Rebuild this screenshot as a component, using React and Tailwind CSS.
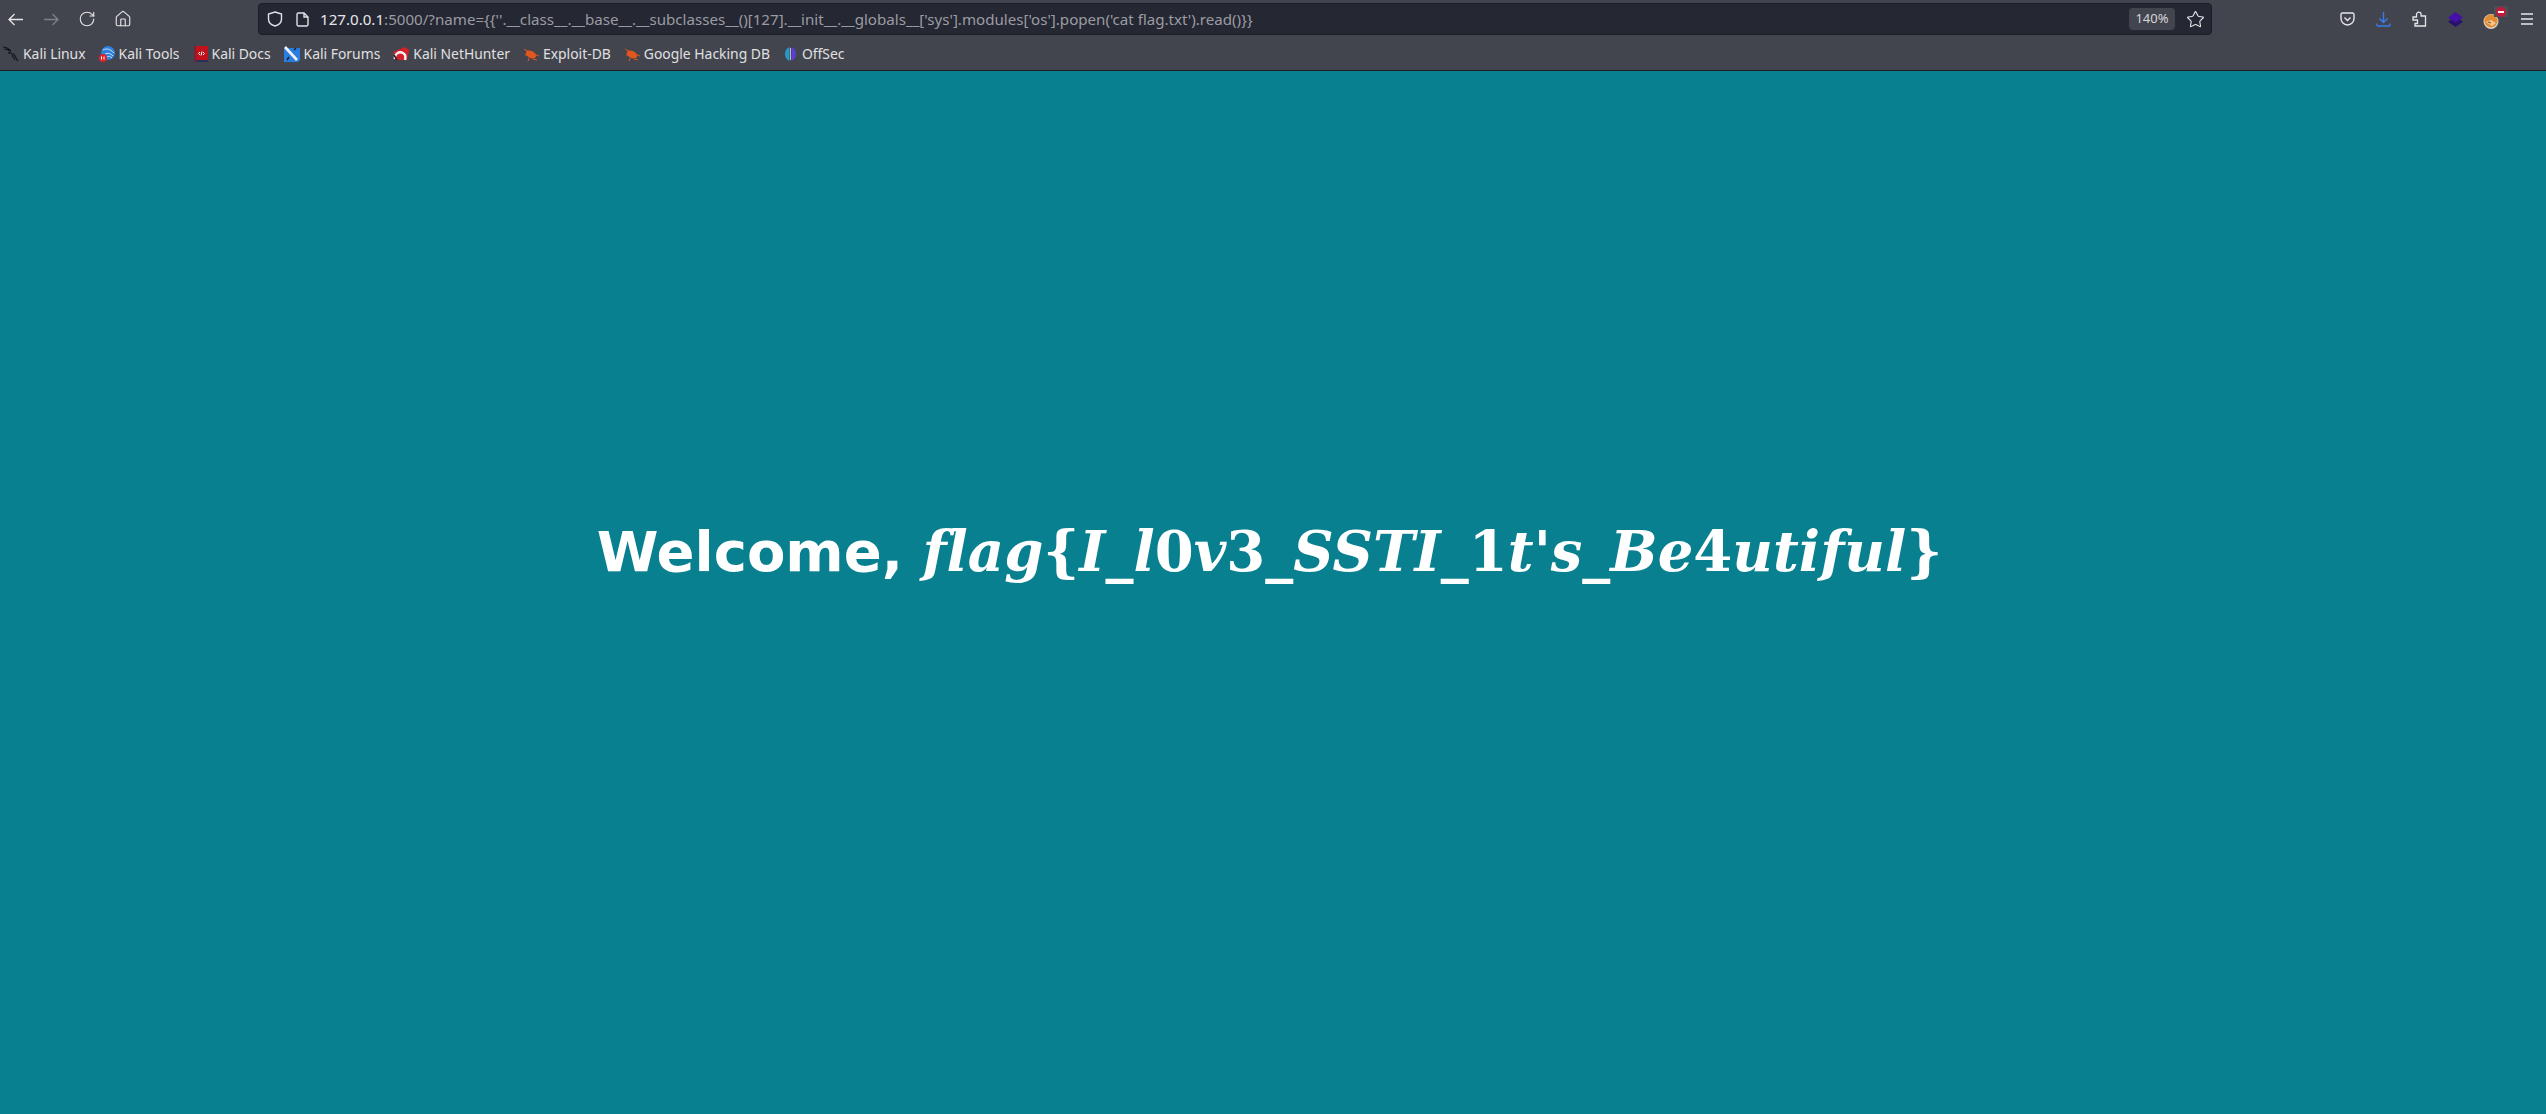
import React from 'react';
import { RotateCw, Home, Star } from 'lucide-react';

const bookmarks = [
  { label: 'Kali Linux', icon: 'kali' },
  { label: 'Kali Tools', icon: 'tools' },
  { label: 'Kali Docs', icon: 'docs' },
  { label: 'Kali Forums', icon: 'forums' },
  { label: 'Kali NetHunter', icon: 'nethunter' },
  { label: 'Exploit-DB', icon: 'bug' },
  { label: 'Google Hacking DB', icon: 'bug' },
  { label: 'OffSec', icon: 'offsec' },
];

const BookmarkIcon = ({ type }) => {
  if (type === 'kali') {
    return (
      <svg width="16" height="16" viewBox="0 0 16 16" fill="none" stroke="#15161a" strokeWidth="1.2">
        <path d="M0 1c3 0 5 1 7 3 1 1 0 3-2 3 3 0 6 1 7 3 1 1 1 3 3 5M1 3c2 0 4 0 5 2M9 9c1 2 2 3 3 5" />
      </svg>
    );
  }
  if (type === 'tools') {
    return (
      <svg width="16" height="16" viewBox="0 0 16 16">
        <circle cx="9" cy="7" r="7" fill="#2f7fdc" />
        <path d="M4 4c4-2 7-1 11 3M6 8c3-1 5-1 8 2M8 11c2-1 3-1 5 1" stroke="#cfe2f7" fill="none" />
        <circle cx="4" cy="12" r="4" fill="#d9242b" />
        <path d="M2.500 10.500v3M5 10.500v3" stroke="#fff" />
      </svg>
    );
  }
  if (type === 'docs') {
    return (
      <svg width="14" height="16" viewBox="0 0 14 16" className="ml-[1px]">
        <rect x="0" y="0" width="14" height="15" fill="#c1121c" />
        <rect x="0" y="14" width="14" height="2" fill="#26305c" />
        <rect x="0" y="0" width="2" height="16" fill="#7d2030" />
        <path d="M6 6L4.500 7.500 6 9M9 6l1.500 1.500L9 9M8 5.500L7 9.500" stroke="#fff" fill="none" />
      </svg>
    );
  }
  if (type === 'forums') {
    return (
      <svg width="16" height="16" viewBox="0 0 16 16">
        <path d="M0 2h16v12l-2 2H0z" fill="#2a7de1" />
        <path d="M1 1l12 13" stroke="#f2f2f2" strokeWidth="2.6" />
        <path d="M10 4l2-2M5 11l-2 3" stroke="#1c2230" strokeWidth="1.500" />
      </svg>
    );
  }
  if (type === 'nethunter') {
    return (
      <svg width="16" height="16" viewBox="0 0 16 16">
        <path d="M0 6l12-5 4 3-2 10H3z" fill="#d5202c" />
        <path d="M2 13c-1-5 4-8 8-6 2 1 3 3 2 7" fill="none" stroke="#f4f4f4" strokeWidth="2.4" />
        <path d="M1 9l3 5" stroke="#23242a" strokeWidth="1.500" />
      </svg>
    );
  }
  if (type === 'bug') {
    return (
      <svg width="16" height="16" viewBox="0 0 16 16" fill="#e2571e">
        <ellipse cx="8" cy="8.500" rx="5.500" ry="3.500" transform="rotate(25 8 8.500)" />
        <path d="M1 3l5 3M2 9l3 0M10 13l4 1M11 8l5 2M6 12l-1 3" stroke="#e2571e" />
      </svg>
    );
  }
  return (
    <svg width="15" height="16" viewBox="0 0 15 16">
      <path d="M6.500 1a7 7.500 0 0 0 0 14z" fill="#2a97c8" />
      <path d="M8.500 1a7 7.500 0 0 1 0 14z" fill="#5a3fd0" />
      <path d="M7.500 2v12" stroke="#d8d8e0" strokeWidth="0.8" />
    </svg>
  );
};

const ToolbarButton = ({ children, className }) => (
  <div className={`flex h-[32px] w-[36px] shrink-0 items-center justify-center ${className || ''}`}>{children}</div>
);

const BookmarkItem = ({ label, icon }) => (
  <div className="flex items-center gap-[4px]">
    <BookmarkIcon type={icon} />
    <span className="whitespace-nowrap">{label}</span>
  </div>
);

export default function App() {
  return (
    <div className="flex min-h-screen flex-col bg-[#08808f] font-['Noto_Sans',sans-serif]">
      {/* Browser chrome */}
      <div className="h-[71px] shrink-0 border-b border-[#1c1d22] bg-[#42454d]">
        <div className="flex h-[38px] items-start pt-[3px]">
          <div className="-ml-[3px] flex w-[261px] shrink-0 items-center">
            <ToolbarButton>
              <svg width="15" height="13" viewBox="0 0 15 13" fill="none" stroke="#e6e6e8" strokeWidth="1.300">
                <path d="M15 6.500H1M6.500 1L1 6.500 6.500 12" />
              </svg>
            </ToolbarButton>
            <ToolbarButton>
              <svg width="15" height="13" viewBox="0 0 15 13" fill="none" stroke="#7f8086" strokeWidth="1.300">
                <path d="M0 6.500h14M8.500 1L14 6.500 8.500 12" />
              </svg>
            </ToolbarButton>
            <ToolbarButton><RotateCw size={18} strokeWidth={1.500} className="text-[#e6e6e8]" /></ToolbarButton>
            <ToolbarButton><Home size={18} strokeWidth={1.500} className="text-[#e6e6e8]" /></ToolbarButton>
          </div>
          <div className="flex h-[32px] w-[1954px] shrink-0 items-center rounded border border-[#1c1d22] bg-[#252733] pl-[8px] pr-[6px]">
            <svg width="16" height="16" viewBox="0 0 16 16" fill="none" stroke="#e2e2e4" strokeWidth="1.400" className="shrink-0">
              <path d="M8 1l6.500 2v5c0 3.500-3 6-6.500 7-3.500-1-6.500-3.500-6.500-7V3z" />
            </svg>
            <svg width="13" height="15" viewBox="0 0 13 15" fill="none" stroke="#e2e2e4" strokeWidth="1.400" className="ml-[13px] shrink-0">
              <path d="M1 2.500A1.500 1.500 0 0 1 2.500 1H8l4 4v7.500a1.500 1.500 0 0 1-1.500 1.500h-8A1.500 1.500 0 0 1 1 12.500zM8 1v4h4" />
            </svg>
            <span className="ml-[11px] whitespace-nowrap text-[15.13px] text-[#e6e6e8]">
              127.0.0.1<span className="text-[#9b9ca2]">{":5000/?name={{''.__class__.__base__.__subclasses__()[127].__init__.__globals__['sys'].modules['os'].popen('cat flag.txt').read()}}"}</span>
            </span>
            <span className="ml-auto flex h-[22px] w-[46px] items-center justify-center rounded bg-[#42454d] text-[13px] text-[#d5d5d8]">140%</span>
            <Star size={19} strokeWidth={1.400} className="ml-[11px] shrink-0 text-[#e6e6e8]" />
          </div>
          <div className="flex flex-1 items-center justify-end pr-[1px]">
            <ToolbarButton>
              <svg width="15" height="14" viewBox="0 0 15 14" fill="none" stroke="#e6e6e8" strokeWidth="1.400">
                <path d="M1 2.500A1.500 1.500 0 0 1 2.500 1h10A1.500 1.500 0 0 1 14 2.500V6.500a6.500 6.500 0 0 1-13 0z" />
                <path d="M4.500 5.500l3 3 3-3" />
              </svg>
            </ToolbarButton>
            <ToolbarButton>
              <svg width="15" height="15" viewBox="0 0 15 15" fill="none" stroke="#3a7cf0" strokeWidth="1.400">
                <path d="M7.500 0v10M3.500 6.500l4 4 4-4M1 11.500v1.500a1 1 0 0 0 1 1h11a1 1 0 0 0 1-1v-1.500" />
              </svg>
            </ToolbarButton>
            <ToolbarButton>
              <svg width="15" height="16" viewBox="0 0 15 16" fill="none" stroke="#e6e6e8" strokeWidth="1.300">
                <path d="M1 6h3.500V3.500a2.300 2.300 0 0 1 4.600 0V5h4.400v10H3v-2.500h2.500V9H1z" />
              </svg>
            </ToolbarButton>
            <ToolbarButton>
              <svg width="17" height="17" viewBox="0 0 16 16">
                <path d="M8 5l7 5-7 5-7-5z" fill="#26126b" />
                <path d="M8 1l7 5-7 5-7-5z" fill="#4310a8" />
              </svg>
            </ToolbarButton>
            <ToolbarButton className="relative">
              <svg width="16" height="15" viewBox="0 0 16 15" className="mt-[5px]">
                <circle cx="8" cy="7.500" r="7.500" fill="#d9d2c6" />
                <circle cx="8" cy="7" r="6.500" fill="#e28a34" />
                <path d="M3 8l5-2 5 3-4 3z" fill="#f4c892" />
                <path d="M5 8l3 1" stroke="#7a4a20" />
              </svg>
              <span className="absolute left-[21px] top-[3px] flex h-[11px] w-[14px] items-center justify-center bg-[#4d4f55]">
                <span className="flex h-[10px] w-[10px] items-center justify-center rounded-full bg-[#c4173a]">
                  <span className="h-[2px] w-[6px] bg-white" />
                </span>
              </span>
            </ToolbarButton>
            <ToolbarButton>
              <svg width="12" height="12" viewBox="0 0 12 12" stroke="#e6e6e8" strokeWidth="1.300">
                <path d="M0 1h12M0 6h12M0 11h12" />
              </svg>
            </ToolbarButton>
          </div>
        </div>
        <div className="flex h-[32px] items-center gap-[13px] pl-[3px] text-[13.9px] text-[#e0e0e2]">
          {bookmarks.map((b) => (
            <BookmarkItem key={b.label} label={b.label} icon={b.icon} />
          ))}
        </div>
      </div>
      {/* Page */}
      <div className="flex flex-1 items-center justify-center pb-[83px] pr-[7px]">
        <h1 className="whitespace-nowrap font-['DejaVu_Sans',sans-serif] text-[56px] font-bold text-white [font-variant-ligatures:none]">
          Welcome,{' '}
          <span className="font-['DejaVu_Serif',serif]">
            <em>flag</em>{'{'}<em>I</em>_<em>l</em>0<em>v</em>3_<em>SSTI</em>_1<em>t</em>'<em>s</em>_<em>Be</em>4<em>utiful</em>{'}'}
          </span>
        </h1>
      </div>
    </div>
  );
}
